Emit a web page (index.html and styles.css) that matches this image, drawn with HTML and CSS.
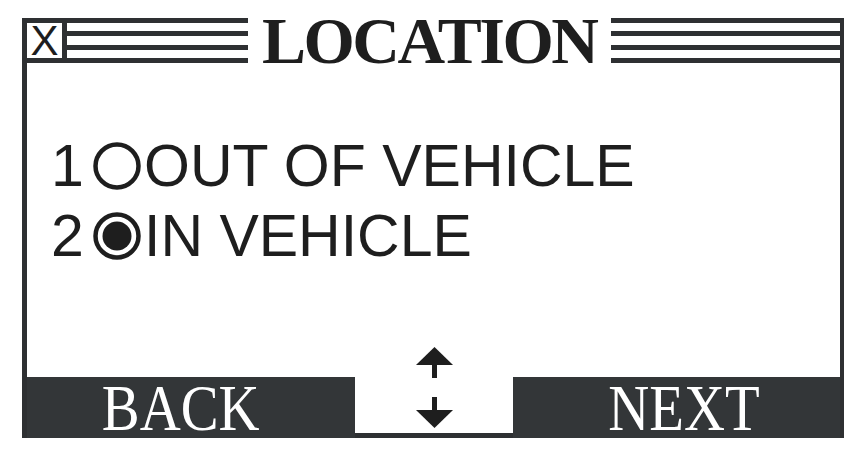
FILE: index.html
```html
<!DOCTYPE html>
<html lang="en">
<head>
  <meta charset="UTF-8" />
  <title>Location</title>
  <link rel="stylesheet" href="styles.css">
</head>
<body>
  <div class="screen">
    <div class="titlebar">
      <div class="close">X</div>
      <div class="stripes left"><span></span><span></span><span></span><span></span></div>
      <h1 class="title">LOCATION</h1>
      <div class="stripes right"><span></span><span></span><span></span><span></span></div>
    </div>

    <ul class="options">
      <li class="option">
        <span class="num">1</span>
        <svg class="radio" width="48" height="48" viewBox="0 0 48 48">
          <circle cx="24" cy="24" r="21.5" fill="none" stroke="#1e1e1e" stroke-width="4.5"/>
        </svg>
        <span class="label">OUT OF VEHICLE</span>
      </li>
      <li class="option">
        <span class="num">2</span>
        <svg class="radio" width="48" height="48" viewBox="0 0 48 48">
          <circle cx="24" cy="24" r="21.5" fill="none" stroke="#1e1e1e" stroke-width="4.5"/>
          <circle cx="24" cy="24" r="14.5" fill="#1e1e1e"/>
        </svg>
        <span class="label">IN VEHICLE</span>
      </li>
    </ul>

    <div class="softkeys">
      <div class="key back"><span>BACK</span></div>
      <div class="scroll">
        <svg width="37" height="81" viewBox="0 0 37 81">
          <polygon points="0,18 18.5,0 37,18" fill="#1e1e1e"/>
          <rect x="16" y="17" width="5" height="14" fill="#1e1e1e"/>
          <rect x="16" y="50" width="5" height="14" fill="#1e1e1e"/>
          <polygon points="0,63 37,63 18.5,81" fill="#1e1e1e"/>
        </svg>
      </div>
      <div class="key next"><span>NEXT</span></div>
    </div>
  </div>
</body>
</html>
```

FILE: styles.css
```css
body {
  margin: 0;
  background: #fff;
  color: #1e1e1e;
}
.screen {
  margin: 18px 0 0 22px;
  width: 813px;
  height: 420px;
  border-left: 5px solid #2e3032;
  border-right: 4px solid #2e3032;
  display: flex;
  flex-direction: column;
}

/* title bar */
.titlebar {
  height: 45px;
  display: flex;
}
.close {
  width: 35px;
  height: 35px;
  border: 5px solid #2e3032;
  border-left: none;
  font-family: "Liberation Sans", Arial, sans-serif;
  font-size: 42px;
  line-height: 35px;
  text-align: center;
}
.stripes {
  display: flex;
  flex-direction: column;
  justify-content: space-between;
}
.stripes span {
  height: 5px;
  background: #2e3032;
}
.stripes.left {
  width: 181px;
}
.stripes.right {
  flex: 1;
}
.title {
  margin: 0;
  padding: 0 14px;
  font-family: "Liberation Serif", "Times New Roman", serif;
  font-weight: bold;
  font-size: 66px;
  line-height: 45px;
  letter-spacing: -2.5px;
}

/* options */
.options {
  flex: 1;
  list-style: none;
  margin: 0;
  padding: 68px 0 0 24px;
  font-family: "Liberation Sans", Arial, sans-serif;
  font-size: 59px;
  line-height: 70px;
}
.option {
  display: flex;
  align-items: center;
  height: 70px;
}
.num {
  width: 42px;
}
.radio {
  margin-right: 3px;
}

/* soft keys */
.softkeys {
  height: 91px;
  display: flex;
  align-items: flex-end;
}
.key {
  box-sizing: border-box;
  height: 61px;
  background: #333638;
  color: #fff;
  font-family: "Liberation Serif", "Times New Roman", serif;
  font-size: 66px;
  line-height: 61px;
  text-align: center;
}
.key span {
  display: inline-block;
  transform: scaleX(0.86);
}
.back {
  width: 328px;
  padding-right: 20px;
}
.next {
  width: 327px;
  padding-left: 15px;
}
.scroll {
  width: 158px;
  height: 86px;
  border-bottom: 5px solid #2e3032;
  text-align: center;
}
.scroll svg {
  display: block;
  margin: 0 auto;
}
```
